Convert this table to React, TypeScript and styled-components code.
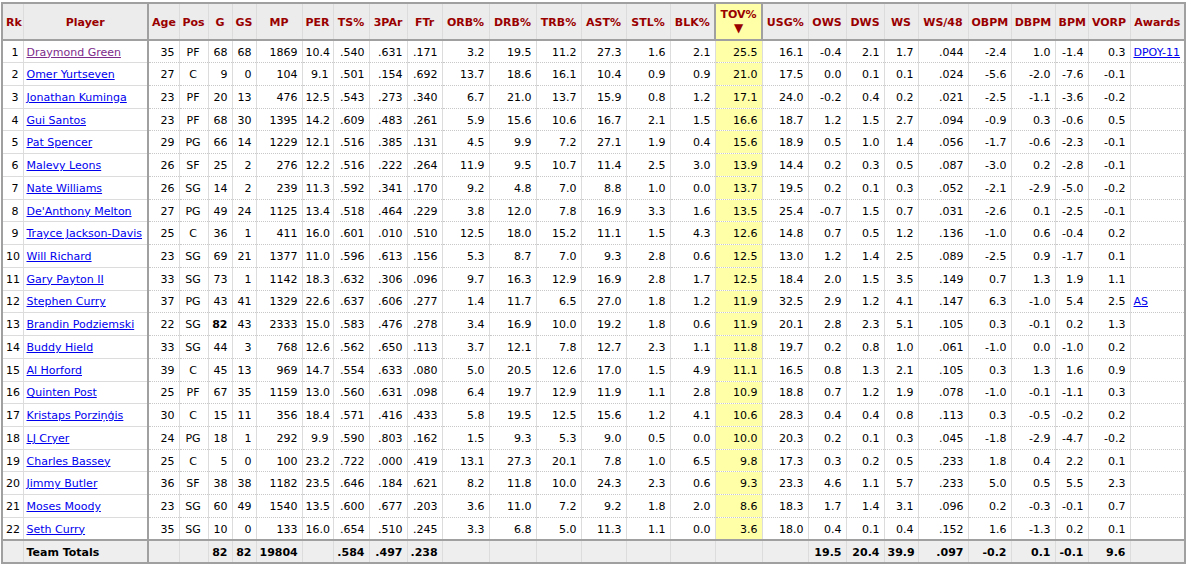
import React from 'react';
import styled, { createGlobalStyle, css } from 'styled-components';

const GlobalStyle = createGlobalStyle`
  html, body {
    margin: 0;
    padding: 0;
    background: #fff;
  }
  body {
    font-family: "DejaVu Sans", Verdana, sans-serif;
    font-size: 11px;
    color: #000;
  }
`;

const Wrapper = styled.div`
  padding: 2px 0 0 1px;
`;

const Table = styled.table`
  table-layout: fixed;
  width: 1183px;
  border-collapse: collapse;
  border: 2px solid #a0a0a0;
`;

const Col = styled.col<{ $w: number }>`
  width: ${p => p.$w}px;
`;

const HeadRow = styled.tr`
  height: 37px;
`;

const Th = styled.th<{ $align?: string; $sorted?: boolean; $strong?: boolean }>`
  background: ${p => (p.$sorted ? '#ffffa8' : '#ececec')};
  color: #990000;
  font-weight: bold;
  font-size: 11px;
  text-align: ${p => p.$align || 'center'};
  padding: 1px 3px 0;
  white-space: nowrap;
  border-left: 1px solid #dcdcdc;
  border-right: ${p => (p.$strong ? '2px solid #a0a0a0' : '1px solid #dcdcdc')};
  border-bottom: 2px solid #a0a0a0;
  ${p =>
    p.$sorted &&
    css`
      border: 2px solid #a0a0a0;
      vertical-align: top;
      padding-top: 4px;
      line-height: 13px;
    `}
`;

const SortArrow = styled.div`
  font-size: 12px;
  line-height: 14px;
  color: #990000;
`;

const Row = styled.tr`
  height: 22.74px;
`;

const TotalRow = styled.tr`
  height: 22.74px;
  background: #eeeeee;
  font-weight: bold;
  td {
    border-top: 2px solid #a0a0a0;
    border-bottom: 2px solid #a0a0a0;
    background: #eeeeee;
  }
`;

const Td = styled.td<{ $align?: string; $sorted?: boolean; $strong?: boolean; $fixed?: boolean }>`
  text-align: ${p => p.$align || 'right'};
  padding: 1px 4px 0 3px;
  white-space: nowrap;
  overflow: hidden;
  background: ${p => (p.$sorted ? '#ffffa8' : '#fff')};
  border-left: 1px solid #dcdcdc;
  border-right: ${p => (p.$strong ? '2px solid #a0a0a0' : '1px solid #dcdcdc')};
  border-bottom: ${p => (p.$fixed ? '1px solid #dcdcdc' : '1px dotted #c8c8c8')};
`;

const PlayerLink = styled.a<{ $visited?: boolean }>`
  color: ${p => (p.$visited ? '#7d2b8b' : '#0000ee')};
  text-decoration: underline;
`;

const Leader = styled.strong`
  font-weight: bold;
`;

type Align = 'left' | 'right' | 'center';

const columns: { key: string; w: number; align: Align; strong?: boolean }[] = [
  { key: 'Rk', w: 21, align: 'right' },
  { key: 'Player', w: 125, align: 'left', strong: true },
  { key: 'Age', w: 31, align: 'right' },
  { key: 'Pos', w: 29, align: 'center' },
  { key: 'G', w: 24, align: 'right' },
  { key: 'GS', w: 24, align: 'right' },
  { key: 'MP', w: 46, align: 'right' },
  { key: 'PER', w: 31, align: 'right' },
  { key: 'TS%', w: 36, align: 'right' },
  { key: '3PAr', w: 38, align: 'right' },
  { key: 'FTr', w: 35, align: 'right' },
  { key: 'ORB%', w: 47, align: 'right' },
  { key: 'DRB%', w: 47, align: 'right' },
  { key: 'TRB%', w: 45, align: 'right' },
  { key: 'AST%', w: 45, align: 'right' },
  { key: 'STL%', w: 44, align: 'right' },
  { key: 'BLK%', w: 45, align: 'right' },
  { key: 'TOV%', w: 47, align: 'right' },
  { key: 'USG%', w: 46, align: 'right' },
  { key: 'OWS', w: 38, align: 'right' },
  { key: 'DWS', w: 38, align: 'right' },
  { key: 'WS', w: 34, align: 'right' },
  { key: 'WS/48', w: 50, align: 'right' },
  { key: 'OBPM', w: 43, align: 'right' },
  { key: 'DBPM', w: 44, align: 'right' },
  { key: 'BPM', w: 33, align: 'right' },
  { key: 'VORP', w: 42, align: 'right' },
  { key: 'Awards', w: 55, align: 'left' },
];

const SORTED = 17;

// each row: name, then stats from Age to VORP, then award
const raw = `Draymond Green|35 PF 68 68 1869 10.4 .540 .631 .171 3.2 19.5 11.2 27.3 1.6 2.1 25.5 16.1 -0.4 2.1 1.7 .044 -2.4 1.0 -1.4 0.3|DPOY-11
Omer Yurtseven|27 C 9 0 104 9.1 .501 .154 .692 13.7 18.6 16.1 10.4 0.9 0.9 21.0 17.5 0.0 0.1 0.1 .024 -5.6 -2.0 -7.6 -0.1|
Jonathan Kuminga|23 PF 20 13 476 12.5 .543 .273 .340 6.7 21.0 13.7 15.9 0.8 1.2 17.1 24.0 -0.2 0.4 0.2 .021 -2.5 -1.1 -3.6 -0.2|
Gui Santos|23 PF 68 30 1395 14.2 .609 .483 .261 5.9 15.6 10.6 16.7 2.1 1.5 16.6 18.7 1.2 1.5 2.7 .094 -0.9 0.3 -0.6 0.5|
Pat Spencer|29 PG 66 14 1229 12.1 .516 .385 .131 4.5 9.9 7.2 27.1 1.9 0.4 15.6 18.9 0.5 1.0 1.4 .056 -1.7 -0.6 -2.3 -0.1|
Malevy Leons|26 SF 25 2 276 12.2 .516 .222 .264 11.9 9.5 10.7 11.4 2.5 3.0 13.9 14.4 0.2 0.3 0.5 .087 -3.0 0.2 -2.8 -0.1|
Nate Williams|26 SG 14 2 239 11.3 .592 .341 .170 9.2 4.8 7.0 8.8 1.0 0.0 13.7 19.5 0.2 0.1 0.3 .052 -2.1 -2.9 -5.0 -0.2|
De'Anthony Melton|27 PG 49 24 1125 13.4 .518 .464 .229 3.8 12.0 7.8 16.9 3.3 1.6 13.5 25.4 -0.7 1.5 0.7 .031 -2.6 0.1 -2.5 -0.1|
Trayce Jackson-Davis|25 C 36 1 411 16.0 .601 .010 .510 12.5 18.0 15.2 11.1 1.5 4.3 12.6 14.8 0.7 0.5 1.2 .136 -1.0 0.6 -0.4 0.2|
Will Richard|23 SG 69 21 1377 11.0 .596 .613 .156 5.3 8.7 7.0 9.3 2.8 0.6 12.5 13.0 1.2 1.4 2.5 .089 -2.5 0.9 -1.7 0.1|
Gary Payton II|33 SG 73 1 1142 18.3 .632 .306 .096 9.7 16.3 12.9 16.9 2.8 1.7 12.5 18.4 2.0 1.5 3.5 .149 0.7 1.3 1.9 1.1|
Stephen Curry|37 PG 43 41 1329 22.6 .637 .606 .277 1.4 11.7 6.5 27.0 1.8 1.2 11.9 32.5 2.9 1.2 4.1 .147 6.3 -1.0 5.4 2.5|AS
Brandin Podziemski|22 SG *82 43 2333 15.0 .583 .476 .278 3.4 16.9 10.0 19.2 1.8 0.6 11.9 20.1 2.8 2.3 5.1 .105 0.3 -0.1 0.2 1.3|
Buddy Hield|33 SG 44 3 768 12.6 .562 .650 .113 3.7 12.1 7.8 12.7 2.3 1.1 11.8 19.7 0.2 0.8 1.0 .061 -1.0 0.0 -1.0 0.2|
Al Horford|39 C 45 13 969 14.7 .554 .633 .080 5.0 20.5 12.6 17.0 1.5 4.9 11.1 16.5 0.8 1.3 2.1 .105 0.3 1.3 1.6 0.9|
Quinten Post|25 PF 67 35 1159 13.0 .560 .631 .098 6.4 19.7 12.9 11.9 1.1 2.8 10.9 18.8 0.7 1.2 1.9 .078 -1.0 -0.1 -1.1 0.3|
Kristaps Porziņģis|30 C 15 11 356 18.4 .571 .416 .433 5.8 19.5 12.5 15.6 1.2 4.1 10.6 28.3 0.4 0.4 0.8 .113 0.3 -0.5 -0.2 0.2|
LJ Cryer|24 PG 18 1 292 9.9 .590 .803 .162 1.5 9.3 5.3 9.0 0.5 0.0 10.0 20.3 0.2 0.1 0.3 .045 -1.8 -2.9 -4.7 -0.2|
Charles Bassey|25 C 5 0 100 23.2 .722 .000 .419 13.1 27.3 20.1 7.8 1.0 6.5 9.8 17.3 0.3 0.2 0.5 .233 1.8 0.4 2.2 0.1|
Jimmy Butler|36 SF 38 38 1182 23.5 .646 .184 .621 8.2 11.8 10.0 24.3 2.3 0.6 9.3 23.3 4.6 1.1 5.7 .233 5.0 0.5 5.5 2.3|
Moses Moody|23 SG 60 49 1540 13.5 .600 .677 .203 3.6 11.0 7.2 9.2 1.8 2.0 8.6 18.3 1.7 1.4 3.1 .096 0.2 -0.3 -0.1 0.7|
Seth Curry|35 SG 10 0 133 16.0 .654 .510 .245 3.3 6.8 5.0 11.3 1.1 0.0 3.6 18.0 0.4 0.1 0.4 .152 1.6 -1.3 0.2 0.1|`;

const players = raw.split('\n').map((line, i) => {
  const [name, stats, award] = line.split('|');
  return { rk: i + 1, name, stats: stats.split(' '), award };
});

const totals = ['', '', '82', '82', '19804', '', '.584', '.497', '.238', '', '', '', '', '', '', '', '', '19.5', '20.4', '39.9', '.097', '-0.2', '0.1', '-0.1', '9.6'];

const App: React.FC = () => {
  return (
    <>
      <GlobalStyle />
      <Wrapper>
        <Table>
          <colgroup>
            {columns.map(c => (
              <Col key={c.key} $w={c.w} />
            ))}
          </colgroup>
          <thead>
            <HeadRow>
              {columns.map((c, i) => (
                <Th key={c.key} $sorted={i === SORTED} $strong={c.strong}>
                  {c.key}
                  {i === SORTED && <SortArrow>▼</SortArrow>}
                </Th>
              ))}
            </HeadRow>
          </thead>
          <tbody>
            {players.map(p => (
              <Row key={p.rk}>
                <Td $fixed>{p.rk}</Td>
                <Td $fixed $strong $align="left">
                  <PlayerLink href="#" $visited={p.rk === 1}>
                    {p.name}
                  </PlayerLink>
                </Td>
                {p.stats.map((s, j) => (
                  <Td key={j} $align={columns[j + 2].align} $sorted={j + 2 === SORTED}>
                    {s.startsWith('*') ? <Leader>{s.slice(1)}</Leader> : s}
                  </Td>
                ))}
                <Td $align="left">{p.award && <PlayerLink href="#">{p.award}</PlayerLink>}</Td>
              </Row>
            ))}
            <TotalRow>
              <Td />
              <Td $strong $align="left">Team Totals</Td>
              {totals.map((s, j) => (
                <Td key={j} $align={columns[j + 2].align}>
                  {s}
                </Td>
              ))}
              <Td />
            </TotalRow>
          </tbody>
        </Table>
      </Wrapper>
    </>
  );
};

export default App;
